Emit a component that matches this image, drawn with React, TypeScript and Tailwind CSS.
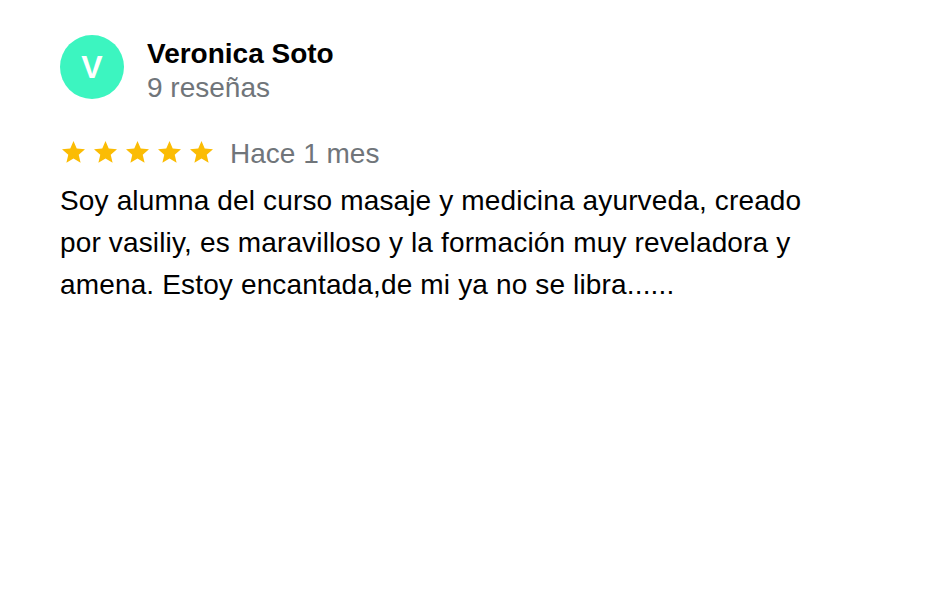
function StarIcon() {
  return (
    <svg width="23" height="22" viewBox="2 2 20 19.2" preserveAspectRatio="none" className="shrink-0">
      <path
        d="M12 17.27L18.18 21l-1.64-7.03L22 9.24l-7.19-.61L12 2 9.19 8.63 2 9.24l5.46 4.73L5.82 21z"
        fill="#fbbc04"
      />
    </svg>
  )
}

export default function App() {
  return (
    <div className="min-h-screen bg-white px-[60px] pt-[35px] font-['Liberation_Sans',Arial,sans-serif]">
      <div className="flex items-start gap-[23px]">
        <div className="flex h-16 w-16 shrink-0 items-center justify-center rounded-full bg-[#3cf5c0] text-[32px] font-bold text-white">
          V
        </div>
        <div className="mt-[2px] flex flex-col">
          <span className="text-[28px] leading-[34px] font-bold text-black">Veronica Soto</span>
          <span className="text-[28px] leading-[34px] text-[#70757a]">9 reseñas</span>
        </div>
      </div>
      <div className="mt-[32px] flex items-start">
        <div className="mt-[4px] ml-[2px] flex gap-[9px]">
          {[0, 1, 2, 3, 4].map((i) => (
            <StarIcon key={i} />
          ))}
        </div>
        <span className="ml-[17px] text-[28px] leading-[34px] text-[#70757a]">Hace 1 mes</span>
      </div>
      <p className="mt-[9px] max-w-[765px] text-[28px] leading-[42px] tracking-[0.15px] text-black">
        Soy alumna del curso masaje y medicina ayurveda, creado por vasiliy, es maravilloso y la formación muy reveladora y amena. Estoy encantada,de mi ya no se libra......
      </p>
    </div>
  )
}
